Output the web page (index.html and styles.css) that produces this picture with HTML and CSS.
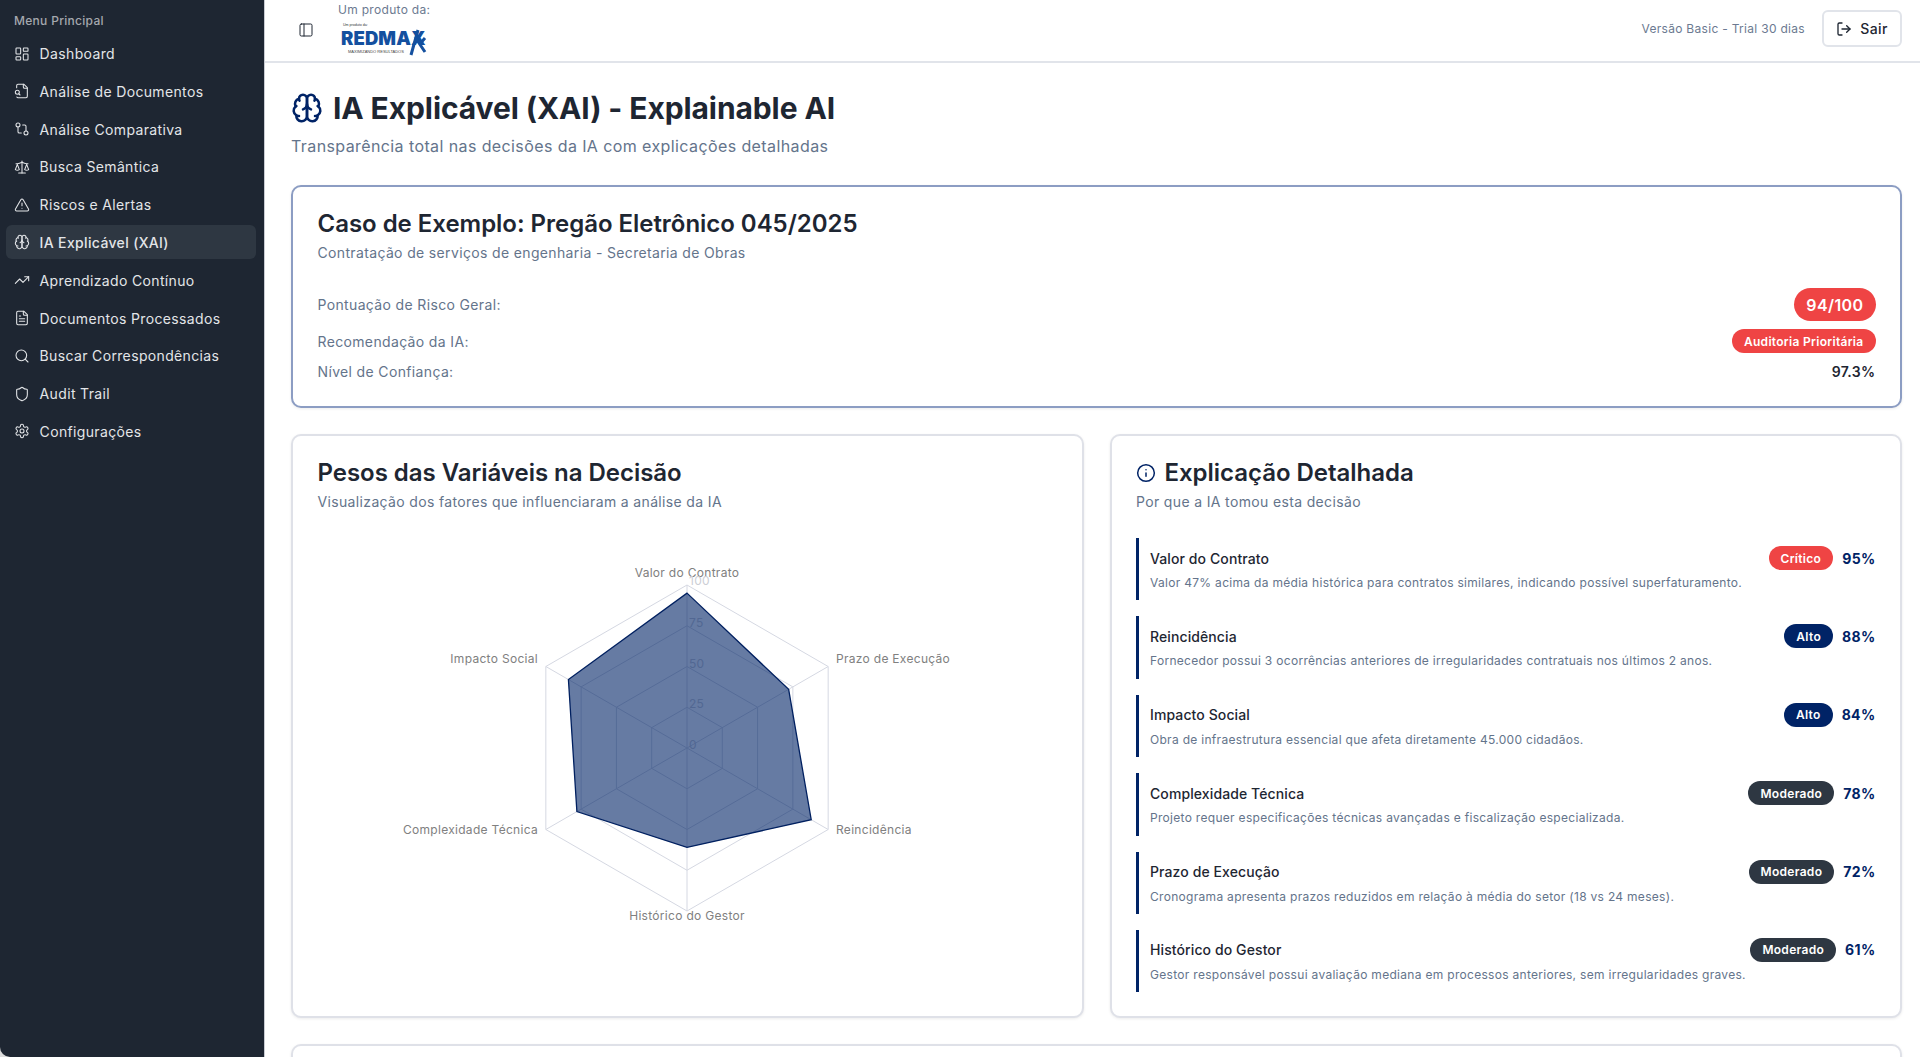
FILE: index.html
```html
<!DOCTYPE html>
<html lang="pt-BR">
<head>
<meta charset="utf-8">
<title>IA Explicável (XAI)</title>
<link rel="stylesheet" href="styles.css">
</head>
<body>
<svg class="sprite" aria-hidden="true">
  <symbol id="i-dash" viewBox="0 0 24 24"><rect x="3" y="3" width="7" height="9" rx="1"/><rect x="14" y="3" width="7" height="5" rx="1"/><rect x="14" y="12" width="7" height="9" rx="1"/><rect x="3" y="16" width="7" height="5" rx="1"/></symbol>
  <symbol id="i-filesearch" viewBox="0 0 24 24"><path d="M14 2v4a2 2 0 0 0 2 2h4"/><path d="M4.268 21a2 2 0 0 0 1.727 1H18a2 2 0 0 0 2-2V7l-5-5H6a2 2 0 0 0-2 2v3"/><path d="m9 18-1.5-1.5"/><circle cx="5" cy="14" r="3"/></symbol>
  <symbol id="i-compare" viewBox="0 0 24 24"><circle cx="18" cy="18" r="3"/><circle cx="6" cy="6" r="3"/><path d="M13 6h3a2 2 0 0 1 2 2v7"/><path d="M11 18H8a2 2 0 0 1-2-2V9"/></symbol>
  <symbol id="i-scale" viewBox="0 0 24 24"><path d="m16 16 3-8 3 8c-.87.65-1.92 1-3 1s-2.13-.35-3-1Z"/><path d="m2 16 3-8 3 8c-.87.65-1.92 1-3 1s-2.13-.35-3-1Z"/><path d="M7 21h10"/><path d="M12 3v18"/><path d="M3 7h2c2 0 5-1 7-2 2 1 5 2 7 2h2"/></symbol>
  <symbol id="i-alert" viewBox="0 0 24 24"><path d="m21.73 18-8-14a2 2 0 0 0-3.48 0l-8 14A2 2 0 0 0 4 21h16a2 2 0 0 0 1.73-3"/><path d="M12 9v4"/><path d="M12 17h.01"/></symbol>
  <symbol id="i-brain" viewBox="0 0 24 24"><path d="M12 5a3 3 0 1 0-5.997.125 4 4 0 0 0-2.526 5.77 4 4 0 0 0 .556 6.588A4 4 0 1 0 12 18Z"/><path d="M12 5a3 3 0 1 1 5.997.125 4 4 0 0 1 2.526 5.77 4 4 0 0 1-.556 6.588A4 4 0 1 1 12 18Z"/><path d="M15 13a4.5 4.5 0 0 1-3-4 4.5 4.5 0 0 1-3 4"/><path d="M17.599 6.5a3 3 0 0 0 .399-1.375"/><path d="M6.003 5.125A3 3 0 0 0 6.401 6.5"/><path d="M3.477 10.896a4 4 0 0 1 .585-.396"/><path d="M19.938 10.5a4 4 0 0 1 .585.396"/><path d="M6 18a4 4 0 0 1-1.967-.516"/><path d="M19.967 17.484A4 4 0 0 1 18 18"/></symbol>
  <symbol id="i-trend" viewBox="0 0 24 24"><polyline points="22 7 13.5 15.5 8.5 10.5 2 17"/><polyline points="16 7 22 7 22 13"/></symbol>
  <symbol id="i-file" viewBox="0 0 24 24"><path d="M15 2H6a2 2 0 0 0-2 2v16a2 2 0 0 0 2 2h12a2 2 0 0 0 2-2V7Z"/><path d="M14 2v4a2 2 0 0 0 2 2h4"/><path d="M10 9H8"/><path d="M16 13H8"/><path d="M16 17H8"/></symbol>
  <symbol id="i-search" viewBox="0 0 24 24"><circle cx="11" cy="11" r="8"/><path d="m21 21-4.3-4.3"/></symbol>
  <symbol id="i-shield" viewBox="0 0 24 24"><path d="M20 13c0 5-3.5 7.5-7.66 8.95a1 1 0 0 1-.67-.01C7.5 20.5 4 18 4 13V6a1 1 0 0 1 1-1c2 0 4.5-1.2 6.24-2.72a1.17 1.17 0 0 1 1.52 0C14.51 3.81 17 5 19 5a1 1 0 0 1 1 1z"/></symbol>
  <symbol id="i-gear" viewBox="0 0 24 24"><path d="M12.22 2h-.44a2 2 0 0 0-2 2v.18a2 2 0 0 1-1 1.73l-.43.25a2 2 0 0 1-2 0l-.15-.08a2 2 0 0 0-2.73.73l-.22.38a2 2 0 0 0 .73 2.73l.15.1a2 2 0 0 1 1 1.72v.51a2 2 0 0 1-1 1.74l-.15.09a2 2 0 0 0-.73 2.73l.22.38a2 2 0 0 0 2.73.73l.15-.08a2 2 0 0 1 2 0l.43.25a2 2 0 0 1 1 1.73V20a2 2 0 0 0 2 2h.44a2 2 0 0 0 2-2v-.18a2 2 0 0 1 1-1.73l.43-.25a2 2 0 0 1 2 0l.15.08a2 2 0 0 0 2.73-.73l.22-.39a2 2 0 0 0-.73-2.73l-.15-.08a2 2 0 0 1-1-1.74v-.5a2 2 0 0 1 1-1.74l.15-.09a2 2 0 0 0 .73-2.73l-.22-.38a2 2 0 0 0-2.73-.73l-.15.08a2 2 0 0 1-2 0l-.43-.25a2 2 0 0 1-1-1.73V4a2 2 0 0 0-2-2z"/><circle cx="12" cy="12" r="3"/></symbol>
  <symbol id="i-panel" viewBox="0 0 24 24"><rect x="3" y="3" width="18" height="18" rx="2"/><path d="M9 3v18"/></symbol>
  <symbol id="i-logout" viewBox="0 0 24 24"><path d="M9 21H5a2 2 0 0 1-2-2V5a2 2 0 0 1 2-2h4"/><polyline points="16 17 21 12 16 7"/><line x1="21" y1="12" x2="9" y2="12"/></symbol>
  <symbol id="i-info" viewBox="0 0 24 24"><circle cx="12" cy="12" r="10"/><path d="M12 16v-4"/><path d="M12 8h.01"/></symbol>
</svg>

<div class="app">
  <aside class="sidebar">
    <div class="side-label">Menu Principal</div>
    <nav class="nav">
      <a class="nav-item"><svg class="icon"><use href="#i-dash"/></svg><span>Dashboard</span></a>
      <a class="nav-item"><svg class="icon"><use href="#i-filesearch"/></svg><span>Análise de Documentos</span></a>
      <a class="nav-item"><svg class="icon"><use href="#i-compare"/></svg><span>Análise Comparativa</span></a>
      <a class="nav-item"><svg class="icon"><use href="#i-scale"/></svg><span>Busca Semântica</span></a>
      <a class="nav-item"><svg class="icon"><use href="#i-alert"/></svg><span>Riscos e Alertas</span></a>
      <a class="nav-item active"><svg class="icon"><use href="#i-brain"/></svg><span>IA Explicável (XAI)</span></a>
      <a class="nav-item"><svg class="icon"><use href="#i-trend"/></svg><span>Aprendizado Contínuo</span></a>
      <a class="nav-item"><svg class="icon"><use href="#i-file"/></svg><span>Documentos Processados</span></a>
      <a class="nav-item"><svg class="icon"><use href="#i-search"/></svg><span>Buscar Correspondências</span></a>
      <a class="nav-item"><svg class="icon"><use href="#i-shield"/></svg><span>Audit Trail</span></a>
      <a class="nav-item"><svg class="icon"><use href="#i-gear"/></svg><span>Configurações</span></a>
    </nav>
  </aside>

  <main class="main">
    <header class="topbar">
      <div class="top-left">
        <button class="panel-btn"><svg class="icon"><use href="#i-panel"/></svg></button>
        <div class="brand">
          <span class="brand-label">Um produto da:</span>
          <svg class="logo" viewBox="0 0 88 36" aria-label="REDMAXX">
            <text class="logo-small" x="2" y="4">Um produto da:</text>
            <text class="logo-main" x="0" y="23">REDMAX</text>
            <path class="logo-mark" d="M77 8 70 33M74 15l10 15M84 16l-6 7"/>
            <text class="logo-tag" x="7" y="31">MAXIMIZANDO RESULTADOS</text>
          </svg>
        </div>
      </div>
      <div class="top-right">
        <span class="version">Versão Basic - Trial 30 dias</span>
        <button class="exit-btn"><svg class="icon"><use href="#i-logout"/></svg><span>Sair</span></button>
      </div>
    </header>

    <div class="content">
      <div class="page-head">
        <h1 class="page-title"><svg class="icon title-icon"><use href="#i-brain"/></svg><span>IA Explicável (XAI) - Explainable AI</span></h1>
        <p class="page-sub">Transparência total nas decisões da IA com explicações detalhadas</p>
      </div>

      <section class="card case-card">
        <h2 class="card-title">Caso de Exemplo: Pregão Eletrônico 045/2025</h2>
        <p class="card-sub">Contratação de serviços de engenharia - Secretaria de Obras</p>
        <div class="case-rows">
          <div class="case-row"><span>Pontuação de Risco Geral:</span><span class="badge badge-score">94/100</span></div>
          <div class="case-row"><span>Recomendação da IA:</span><span class="badge badge-red">Auditoria Prioritária</span></div>
          <div class="case-row"><span>Nível de Confiança:</span><strong class="confidence">97.3%</strong></div>
        </div>
      </section>

      <div class="two-col">
        <section class="card">
          <h2 class="card-title">Pesos das Variáveis na Decisão</h2>
          <p class="card-sub">Visualização dos fatores que influenciaram a análise da IA</p>
          <svg class="radar" viewBox="0 0 738 460">
            <g class="radar-grid">
              <polygon points="369,55 510.16,136.5 510.16,299.5 369,381 227.84,299.5 227.84,136.5"/>
              <polygon points="369,95.75 474.87,156.875 474.87,279.125 369,340.25 263.13,279.125 263.13,156.875"/>
              <polygon points="369,136.5 439.58,177.25 439.58,258.75 369,299.5 298.42,258.75 298.42,177.25"/>
              <polygon points="369,177.25 404.29,197.625 404.29,238.375 369,258.75 333.71,238.375 333.71,197.625"/>
              <line x1="369" y1="218" x2="369" y2="55"/>
              <line x1="369" y1="218" x2="510.16" y2="136.5"/>
              <line x1="369" y1="218" x2="510.16" y2="299.5"/>
              <line x1="369" y1="218" x2="369" y2="381"/>
              <line x1="369" y1="218" x2="227.84" y2="299.5"/>
              <line x1="369" y1="218" x2="227.84" y2="136.5"/>
            </g>
            <g class="radar-labels">
              <text x="369" y="42" text-anchor="middle">Valor do Contrato</text>
              <text x="518" y="128">Prazo de Execução</text>
              <text x="518" y="299">Reincidência</text>
              <text x="369" y="385" text-anchor="middle">Histórico do Gestor</text>
              <text x="220" y="299" text-anchor="end">Complexidade Técnica</text>
              <text x="220" y="128" text-anchor="end">Impacto Social</text>
            </g>
            <g class="radar-ticks">
              <text x="371" y="50">100</text>
              <text x="371" y="92">75</text>
              <text x="371" y="133">50</text>
              <text x="371" y="173">25</text>
              <text x="371" y="214">0</text>
            </g>
            <polygon class="radar-data" points="369,63.15 470.64,159.32 493.22,289.72 369,317.43 258.89,281.57 250.42,149.54"/>
          </svg>
        </section>

        <section class="card">
          <h2 class="card-title card-title-icon"><svg class="icon info-icon"><use href="#i-info"/></svg><span>Explicação Detalhada</span></h2>
          <p class="card-sub">Por que a IA tomou esta decisão</p>
          <div class="factors">
            <article class="factor">
              <div class="factor-head"><span class="factor-name">Valor do Contrato</span><div class="factor-meta"><span class="badge badge-red">Crítico</span><strong class="factor-pct">95%</strong></div></div>
              <p class="factor-desc">Valor 47% acima da média histórica para contratos similares, indicando possível superfaturamento.</p>
            </article>
            <article class="factor">
              <div class="factor-head"><span class="factor-name">Reincidência</span><div class="factor-meta"><span class="badge badge-navy">Alto</span><strong class="factor-pct">88%</strong></div></div>
              <p class="factor-desc">Fornecedor possui 3 ocorrências anteriores de irregularidades contratuais nos últimos 2 anos.</p>
            </article>
            <article class="factor">
              <div class="factor-head"><span class="factor-name">Impacto Social</span><div class="factor-meta"><span class="badge badge-navy">Alto</span><strong class="factor-pct">84%</strong></div></div>
              <p class="factor-desc">Obra de infraestrutura essencial que afeta diretamente 45.000 cidadãos.</p>
            </article>
            <article class="factor">
              <div class="factor-head"><span class="factor-name">Complexidade Técnica</span><div class="factor-meta"><span class="badge badge-slate">Moderado</span><strong class="factor-pct">78%</strong></div></div>
              <p class="factor-desc">Projeto requer especificações técnicas avançadas e fiscalização especializada.</p>
            </article>
            <article class="factor">
              <div class="factor-head"><span class="factor-name">Prazo de Execução</span><div class="factor-meta"><span class="badge badge-slate">Moderado</span><strong class="factor-pct">72%</strong></div></div>
              <p class="factor-desc">Cronograma apresenta prazos reduzidos em relação à média do setor (18 vs 24 meses).</p>
            </article>
            <article class="factor">
              <div class="factor-head"><span class="factor-name">Histórico do Gestor</span><div class="factor-meta"><span class="badge badge-slate">Moderado</span><strong class="factor-pct">61%</strong></div></div>
              <p class="factor-desc">Gestor responsável possui avaliação mediana em processos anteriores, sem irregularidades graves.</p>
            </article>
          </div>
        </section>
      </div>

      <section class="card next-card"></section>
    </div>
  </main>
</div>
</body>
</html>
```

FILE: styles.css
```css
* { box-sizing: border-box; letter-spacing: .025em; }
html, body { margin: 0; height: 100%; }
body {
  font-family: Inter, "Liberation Sans", sans-serif;
  color: #1e2632;
  background: #dcdcdc;
  overflow: hidden;
}
h1, h2, p { margin: 0; }
.sprite { display: none; }
.icon {
  width: 16px;
  height: 16px;
  flex: none;
  fill: none;
  stroke: currentColor;
  stroke-width: 2;
  stroke-linecap: round;
  stroke-linejoin: round;
}
.app { display: flex; height: 1057px; }

.sidebar {
  width: 265px;
  flex: none;
  background: #1e2632;
  color: #e3e5e8;
  border-right: 1px solid #c9ccd3;
  border-bottom-left-radius: 10px;
  padding: 12px 8px 0 6px;
}
.side-label {
  font-size: 12px;
  font-weight: 500;
  line-height: 18px;
  color: #a5a8ae;
  padding-left: 8px;
  margin-bottom: 6.5px;
}
.nav { display: flex; flex-direction: column; gap: 3.8px; }
.nav-item {
  display: flex;
  align-items: center;
  gap: 9.6px;
  height: 34px;
  padding-left: 8px;
  border-radius: 6px;
  font-size: 14px;
}
.nav-item .icon { stroke-width: 1.6; }
.nav-item.active { background: #2e3742; font-weight: 500; }

.main {
  flex: 1;
  min-width: 0;
  background: #fff;
  display: flex;
  flex-direction: column;
  overflow: hidden;
}
.topbar {
  height: 63px;
  flex: none;
  display: flex;
  align-items: center;
  justify-content: space-between;
  padding: 0 18px 0 27px;
  border-bottom: 2px solid #e1e4ea;
}
.top-left { display: flex; align-items: center; gap: 18px; }
.panel-btn {
  width: 28px;
  height: 28px;
  padding: 0;
  margin-bottom: 2px;
  border: 0;
  background: none;
  color: #1e2632;
  display: flex;
  align-items: center;
  justify-content: center;
}
.panel-btn .icon { stroke-width: 1.5; }
.brand { display: flex; flex-direction: column; height: 61px; }
.brand-label { font-size: 12px; line-height: 20px; color: #6c7a91; }
.logo { width: 88px; height: 36px; margin-left: 3px; margin-top: 2px; }
.logo-small { font-size: 3.6px; fill: #333; font-family: "Liberation Sans", sans-serif; letter-spacing: 0; }
.logo-main { font-size: 18.5px; font-weight: 900; fill: #14509f; font-family: Inter, sans-serif; letter-spacing: .1px; }
.logo-mark { fill: none; stroke: #14509f; stroke-width: 3; }
.logo-tag { font-size: 4px; fill: #444; font-family: "Liberation Sans", sans-serif; letter-spacing: 0; }
.top-right { display: flex; align-items: center; gap: 17px; margin-bottom: 4px; }
.version { font-size: 12px; color: #6c7a91; }
.exit-btn {
  width: 80px;
  height: 37px;
  display: flex;
  align-items: center;
  justify-content: center;
  gap: 8px;
  background: #fff;
  border: 2px solid #e1e4ea;
  border-radius: 6px;
  font: 500 14px Inter, sans-serif;
  color: #1e2632;
}

.content { padding: 26px 18px 0 26px; flex: 1; min-height: 0; overflow: hidden; }
.page-title {
  display: flex;
  align-items: center;
  gap: 10px;
  font-size: 30px;
  line-height: 38px;
  font-weight: 700;
}
.page-title span { letter-spacing: -.1px; }
.title-icon { width: 32px; height: 32px; color: #002366; stroke-width: 1.9; }
.page-sub { margin-top: 8px; font-size: 16px; line-height: 22px; color: #64748b; }

.card {
  min-width: 0;
  background: #fff;
  border: 2px solid #dfe1e8;
  border-radius: 10px;
  box-shadow: 0 1px 3px rgba(0,0,0,.08);
  padding: 21px 24.5px 23.6px;
}
.case-card { margin-top: 28px; border-color: #8c9dc3; padding: 21px 24.5px 25px; }
.card-title { font-size: 24px; line-height: 32px; font-weight: 600; letter-spacing: -.03px; }
.card-title span { letter-spacing: -.03px; }
.card-title-icon { display: flex; align-items: center; gap: 8.5px; }
.info-icon { width: 20px; height: 20px; color: #002366; stroke-width: 1.8; }
.card-sub { margin-top: 3px; font-size: 14px; line-height: 20px; color: #64748b; }

.case-rows { margin-top: 25px; display: flex; flex-direction: column; gap: 8px; }
.case-row {
  display: flex;
  align-items: center;
  justify-content: space-between;
  font-size: 14px;
  color: #64748b;
  min-height: 20px;
}
.badge {
  display: inline-flex;
  align-items: center;
  justify-content: center;
  border-radius: 999px;
  color: #fff;
  font-weight: 600;
  font-size: 12px;
  height: 24px;
  padding: 0 12px;
}
.badge-score { background: #ef4444; height: 33px; font-size: 16px; padding: 0 12px; }
.badge-red { background: #ef4444; }
.badge-navy { background: #002366; }
.badge-slate { background: #2e3742; }
.confidence { font-size: 14px; font-weight: 600; color: #1e2632; }

.two-col { margin-top: 26px; display: grid; grid-template-columns: 1fr 1fr; gap: 26px; }
.radar { display: block; width: 738px; height: 460px; margin-top: 18px; }
.radar-grid polygon, .radar-grid line { fill: none; stroke: #d5d8e2; stroke-width: 1; }
.radar-labels text { font-size: 12px; fill: #808080; dominant-baseline: central; }
.radar-ticks text { font-size: 12px; fill: #ccced5; dominant-baseline: central; }
.radar-data { fill: #002366; fill-opacity: .6; stroke: #002060; stroke-width: 1.3; }

.factors { margin-top: 26px; display: flex; flex-direction: column; gap: 16px; }
.factor {
  border-left: 3px solid #002366;
  padding: 8px 0 0 11px;
  min-height: 62.4px;
}
.factor-head { display: flex; align-items: center; justify-content: space-between; height: 24px; }
.factor-name { font-size: 14px; font-weight: 500; letter-spacing: .1px; }
.factor-meta { display: flex; align-items: center; gap: 9px; }
.factor-pct { font-size: 14px; font-weight: 700; color: #002366; }
.factor-desc { margin-top: 5px; font-size: 12px; line-height: 16px; color: #64748b; }

.next-card { margin-top: 26px; height: 300px; }
```
